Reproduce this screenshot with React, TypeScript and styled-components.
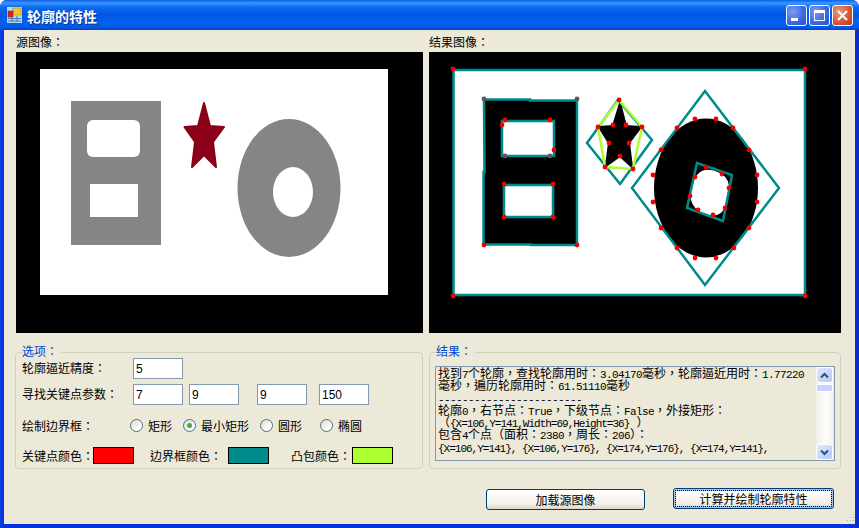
import React from 'react'
import styled, { createGlobalStyle } from 'styled-components'

const GlobalStyle = createGlobalStyle`
  html, body {
    margin: 0;
    padding: 0;
    background: #fff;
  }
  body {
    font-family: 'Liberation Sans', 'Noto Sans CJK TC', sans-serif;
    font-size: 12px;
    color: #000;
  }
`

const Window = styled.div`
  width: 859px;
  height: 528px;
  display: flex;
  flex-direction: column;
  box-sizing: border-box;
  border-radius: 7px 7px 0 0;
  overflow: hidden;
  position: relative;
  background: linear-gradient(to right, #0a3fe0 0, #0831d9 4px, #0831d9 855px, #0a2bc4 859px);
`

const TitleBar = styled.div`
  height: 30px;
  flex: none;
  display: flex;
  align-items: center;
  padding: 0 6px 0 7px;
  background: linear-gradient(
    to bottom,
    #0a5fe6 0,
    #3d95ff 3px,
    #0a6cf0 7px,
    #0058e6 14px,
    #0362ee 24px,
    #0353e2 28px,
    #0042c8 30px
  );
`

const TitleText = styled.span`
  margin: 1px 0 0 5px;
  flex: 1;
  font-size: 14px;
  font-weight: bold;
  color: #fff;
  text-shadow: 1px 1px 1px #0a2a90;
`

const CaptionButton = styled.div<{ $close?: boolean }>`
  width: 21px;
  height: 21px;
  margin-left: 2px;
  box-sizing: border-box;
  border: 1px solid #fff;
  border-radius: 3px;
  display: flex;
  align-items: center;
  justify-content: center;
  background: ${(p) =>
    p.$close
      ? 'radial-gradient(circle at 30% 30%, #e99a80, #d8532f 60%, #b83a18)'
      : 'radial-gradient(circle at 30% 30%, #7d9df0, #3c66e0 60%, #2a4fd0)'};
`

const Client = styled.div`
  flex: 1;
  margin: 0 4px 4px;
  padding: 6px 14px 0 12px;
  background: #ece9d8;
  display: flex;
  flex-direction: column;
`

const ImageRow = styled.div`
  display: flex;
  gap: 6px;
`

const ImageColumn = styled.div<{ $width: number }>`
  width: ${(p) => p.$width}px;
  display: flex;
  flex-direction: column;
`

const ImageCaption = styled.div`
  height: 16px;
  line-height: 15px;
`

const Picture = styled.svg`
  display: block;
  height: 281px;
  width: 100%;
  background: #000;
`

const GroupRow = styled.div`
  display: flex;
  margin-top: 19px;
  margin-left: -1px;
  gap: 6px;
`

const Group = styled.div<{ $width: number }>`
  position: relative;
  width: ${(p) => p.$width}px;
  height: 117px;
  box-sizing: border-box;
  border: 1px solid #d0d0bf;
  border-radius: 4px;
`

const GroupTitle = styled.span`
  position: absolute;
  left: 6px;
  top: -8px;
  padding-right: 3px;
  line-height: 14px;
  background: #ece9d8;
  color: #0046d5;
`

const OptionsBody = styled.div`
  display: flex;
  flex-direction: column;
  padding: 5px 0 0 6px;
`

const Row = styled.div<{ $top?: number }>`
  display: flex;
  align-items: center;
  margin-top: ${(p) => p.$top ?? 0}px;
`

const RowLabel = styled.span`
  width: 111px;
  margin-top: -3px;
`

const NumberInput = styled.input<{ $left?: number }>`
  width: 50px;
  height: 21px;
  box-sizing: border-box;
  margin: 0 0 0 ${(p) => p.$left ?? 0}px;
  padding: 0 2px;
  border: 1px solid #8499ad;
  background: #fff;
  font: 12px 'Liberation Sans', sans-serif;
  color: #000;
  outline: none;
`

const RadioGrid = styled.div`
  display: grid;
  grid-template-columns: 108px 53px 77px 60px auto;
  align-items: center;
  margin-top: 12px;
  height: 14px;
`

const RadioItem = styled.label`
  display: flex;
  align-items: center;
  gap: 5px;
`

const RadioDot = styled.span<{ $checked?: boolean }>`
  width: 13px;
  height: 13px;
  box-sizing: border-box;
  border: 1px solid #4f6d8c;
  border-radius: 50%;
  display: flex;
  align-items: center;
  justify-content: center;
  background: linear-gradient(135deg, #dcd9cc, #ffffff 75%);
  &::after {
    content: '';
    display: ${(p) => (p.$checked ? 'block' : 'none')};
    width: 5px;
    height: 5px;
    border-radius: 50%;
    background: #4aa83f;
  }
`

const ColorLabel = styled.span<{ $width: number; $left?: number }>`
  width: ${(p) => p.$width}px;
  margin-left: ${(p) => p.$left ?? 0}px;
  white-space: nowrap;
`

const Swatch = styled.div<{ $color: string }>`
  width: 41px;
  height: 17px;
  box-sizing: border-box;
  border: 1px solid #000;
  background: ${(p) => p.$color};
`

const ResultBody = styled.div`
  margin: 13px 5px 0;
  height: 95px;
  box-sizing: border-box;
  border: 1px solid #8499ad;
  display: flex;
`

const ResultText = styled.div`
  flex: 1;
  padding: 2px 0 0 2px;
  font-family: 'Liberation Mono', 'Noto Sans CJK TC', monospace;
  line-height: 12.3px;
  white-space: pre;
  overflow: hidden;
  & > div {
    height: 12.3px;
    font-size: 12px;
  }
  span {
    font-size: 11px;
    letter-spacing: -0.6px;
  }
`

const Coords = styled.span`
  && {
    letter-spacing: -1px;
  }
`

const ScrollBar = styled.div`
  width: 17px;
  margin-right: 1px;
  flex: none;
  display: flex;
  flex-direction: column;
  background: linear-gradient(to right, #f1f0e8, #fdfdfa 60%, #f3f2ea);
`

const ScrollButton = styled.div`
  height: 16px;
  flex: none;
  box-sizing: border-box;
  border: 1px solid #fff;
  border-radius: 3px;
  display: flex;
  align-items: center;
  justify-content: center;
  background: linear-gradient(135deg, #e1eafe, #b4c8f6);
`

const ScrollThumb = styled.div`
  height: 8px;
  margin-top: 1px;
  box-sizing: border-box;
  border: 1px solid #fff;
  border-radius: 2px;
  background: #c3d3fb;
`

const ScrollTrack = styled.div`
  flex: 1;
`

const ButtonRow = styled.div`
  display: flex;
  justify-content: flex-end;
  align-items: flex-start;
  margin-top: 20px;
  margin-right: 7px;
`

const FormButton = styled.button<{ $width: number; $focused?: boolean; $left?: number }>`
  width: ${(p) => p.$width}px;
  height: 21px;
  margin: ${(p) => (p.$focused ? -1 : 0)}px 0 0 ${(p) => p.$left ?? 0}px;
  padding: 0;
  box-sizing: border-box;
  border: 1px solid #003c74;
  border-radius: 3px;
  background: linear-gradient(to bottom, #ffffff, #f3f2ec 70%, #dcd8ca);
  font: 12px 'Liberation Sans', 'Noto Sans CJK TC', sans-serif;
  color: #000;
  ${(p) =>
    p.$focused &&
    `
    box-shadow: inset 0 0 0 2px #a9c5ee;
    outline: 1px dotted #000;
    outline-offset: -3px;
  `}
`

const ResizeGrip = styled.svg`
  position: absolute;
  right: 4px;
  bottom: 5px;
`

const keyPoints = [
  [695, 119], [716, 119], [733, 128], [749, 150], [757, 175], [757, 202], [749, 228], [734, 248],
  [716, 258], [695, 258], [677, 248], [661, 228], [653, 202], [653, 175], [661, 150], [677, 128],
  [706, 167], [722, 174], [729, 188], [725, 208], [713, 215], [698, 210], [690, 196], [695, 177],
  [613, 125], [626, 125], [609, 143], [629, 143], [620, 156],
  [453, 69], [805, 69], [453, 296], [805, 296],
  [484, 245], [577, 245], [504, 217], [553, 217], [504, 184], [553, 184],
  [505, 120], [550, 120], [502, 125], [554, 150],
  [605, 167], [633, 169], [642, 127], [598, 127], [619, 100],
]

const dimPoints = [[484, 99], [577, 99], [505, 156], [550, 156]]

function SourcePicture() {
  return (
    <Picture viewBox="16 52 407 281">
      <rect x="40" y="69" width="348" height="226" fill="#fff" />
      <rect x="71" y="101" width="90" height="144" fill="#858585" />
      <rect x="87" y="120" width="53" height="37" rx="6" fill="#fff" />
      <rect x="90" y="184" width="48" height="33" fill="#fff" />
      <path
        d="M204 103 L210 126 L224 127 L213 142 L216 167 L204 155 L192 167 L195 142 L184.500 127 L198 126 Z"
        fill="#8b0018"
        stroke="#8b0018"
        strokeWidth="2"
        strokeLinejoin="round"
      />
      <ellipse cx="289" cy="188" rx="51.5" ry="69" fill="#858585" />
      <ellipse cx="293" cy="192" rx="20" ry="25" fill="#fff" />
    </Picture>
  )
}

function ResultPicture() {
  return (
    <Picture viewBox="429 52 412 281">
      <rect x="453.5" y="70" width="351.5" height="225" fill="#fff" stroke="#008b8b" strokeWidth="2.5" />
      <rect x="484" y="100" width="93" height="145" fill="#000" />
      <path
        d="M484 99.5 H530 V100.5 H577 V245 H531 V244.5 H483.5 V172 H484.5 Z"
        fill="none"
        stroke="#008b8b"
        strokeWidth="2.5"
      />
      <rect x="502" y="121" width="52" height="35" fill="#fff" stroke="#008b8b" strokeWidth="2.5" />
      <rect x="504" y="185" width="49" height="32" fill="#fff" stroke="#008b8b" strokeWidth="2.5" />
      <path
        d="M620 103 L626 126 L641 127 L629 143 L632 167 L620 156 L606 166 L609 143 L599 127 L613 126 Z"
        fill="#000"
        stroke="#000"
        strokeWidth="2"
        strokeLinejoin="round"
      />
      <polygon points="618,100 652,140 620,184 587,143" fill="none" stroke="#008b8b" strokeWidth="2.5" />
      <polygon points="619,100 642,127 633,169 605,167 598,127" fill="none" stroke="#adff2f" strokeWidth="2.5" />
      <ellipse cx="706" cy="188" rx="52" ry="69.5" fill="#000" />
      <path
        d="M697 175 Q705 165 722 174 Q730 180 729 190 Q728 205 722 212 Q714 219 700 212 Q690 206 690 192 Q691 182 697 175 Z"
        fill="#fff"
      />
      <polygon points="705,91 779,188 705,285 632,188" fill="none" stroke="#008b8b" strokeWidth="2.5" />
      <polygon points="697,163 732,175 723,221 687,208" fill="none" stroke="#008b8b" strokeWidth="2.5" />
      {keyPoints.map(([x, y]) => (
        <circle key={`${x}-${y}`} cx={x} cy={y} r="2.4" fill="#f00000" />
      ))}
      {dimPoints.map(([x, y]) => (
        <circle key={`${x}-${y}`} cx={x} cy={y} r="2.4" fill="#5f5560" />
      ))}
    </Picture>
  )
}

function ChevronIcon({ down }: { down?: boolean }) {
  return (
    <svg width="9" height="7" viewBox="0 0 9 7">
      <path
        d={down ? 'M1 1.5 L4.5 5 L8 1.5' : 'M1 5.5 L4.5 2 L8 5.5'}
        fill="none"
        stroke="#2f4f86"
        strokeWidth="2"
      />
    </svg>
  )
}

function AppIcon() {
  return (
    <svg width="15" height="16" viewBox="0 0 15 16">
      <rect x="0" y="0" width="15" height="16" fill="#b8d4ee" />
      <rect x="6" y="1" width="8" height="7" fill="#f4c430" stroke="#a08020" strokeWidth="0.5" />
      <rect x="1" y="4" width="5" height="6" fill="#d92020" stroke="#802020" strokeWidth="0.5" />
      <path d="M1 11.5 H14 M1 14 H14 M5 10 V15 M10 9 V15" stroke="#3b7fb5" strokeWidth="1" />
    </svg>
  )
}

export default function App() {
  return (
    <>
      <GlobalStyle />
      <Window>
        <TitleBar>
          <AppIcon />
          <TitleText>轮廓的特性</TitleText>
          <CaptionButton>
            <svg width="13" height="13" viewBox="0 0 13 13">
              <rect x="1" y="9" width="7" height="3" fill="#fff" />
            </svg>
          </CaptionButton>
          <CaptionButton>
            <svg width="13" height="13" viewBox="0 0 13 13">
              <rect x="1.5" y="1.5" width="10" height="10" fill="none" stroke="#fff" />
              <rect x="1" y="1" width="11" height="3" fill="#fff" />
            </svg>
          </CaptionButton>
          <CaptionButton $close>
            <svg width="13" height="13" viewBox="0 0 13 13">
              <path d="M2 2 L11 11 M11 2 L2 11" stroke="#fff" strokeWidth="2" />
            </svg>
          </CaptionButton>
        </TitleBar>

        <Client>
          <ImageRow>
            <ImageColumn $width={407}>
              <ImageCaption>源图像：</ImageCaption>
              <SourcePicture />
            </ImageColumn>
            <ImageColumn $width={412}>
              <ImageCaption>结果图像：</ImageCaption>
              <ResultPicture />
            </ImageColumn>
          </ImageRow>

          <GroupRow>
            <Group $width={408}>
              <GroupTitle>选项：</GroupTitle>
              <OptionsBody>
                <Row>
                  <RowLabel>轮廓逼近精度：</RowLabel>
                  <NumberInput readOnly value="5" />
                </Row>
                <Row $top={5}>
                  <RowLabel>寻找关键点参数：</RowLabel>
                  <NumberInput readOnly value="7" />
                  <NumberInput readOnly value="9" $left={6} />
                  <NumberInput readOnly value="9" $left={18} />
                  <NumberInput readOnly value="150" $left={12} />
                </Row>
                <RadioGrid>
                  <span>绘制边界框：</span>
                  <RadioItem>
                    <RadioDot />
                    矩形
                  </RadioItem>
                  <RadioItem>
                    <RadioDot $checked />
                    最小矩形
                  </RadioItem>
                  <RadioItem>
                    <RadioDot />
                    圆形
                  </RadioItem>
                  <RadioItem>
                    <RadioDot />
                    椭圆
                  </RadioItem>
                </RadioGrid>
                <Row $top={16}>
                  <ColorLabel $width={71}>关键点颜色：</ColorLabel>
                  <Swatch $color="#ff0000" />
                  <ColorLabel $width={78} $left={16}>
                    边界框颜色：
                  </ColorLabel>
                  <Swatch $color="#008b8b" />
                  <ColorLabel $width={61} $left={22}>
                    凸包颜色：
                  </ColorLabel>
                  <Swatch $color="#adff2f" />
                </Row>
              </OptionsBody>
            </Group>

            <Group $width={412}>
              <GroupTitle>结果：</GroupTitle>
              <ResultBody>
                <ResultText>
                  <div>
                    找到<span>7</span>个轮廓，查找轮廓用时：<span>3.04170</span>毫秒，轮廓逼近用时：<span>1.77220</span>
                  </div>
                  <div>
                    毫秒，遍历轮廓用时：<span>61.51110</span>毫秒
                  </div>
                  <div>
                    <span>------------------------</span>
                  </div>
                  <div>
                    轮廓<span>0</span>，右节点：<span>True</span>，下级节点：<span>False</span>，外接矩形：
                  </div>
                  <div>
                    （<Coords>{'{X=106,Y=141,Width=69,Height=36}'}</Coords> ）
                  </div>
                  <div>
                    包含<span>4</span>个点（面积：<span>2380</span>，周长：<span>206</span>）：
                  </div>
                  <div>
                    <Coords>{'{X=106,Y=141}, {X=106,Y=176}, {X=174,Y=176}, {X=174,Y=141},'}</Coords>
                  </div>
                </ResultText>
                <ScrollBar>
                  <ScrollButton>
                    <ChevronIcon />
                  </ScrollButton>
                  <ScrollThumb />
                  <ScrollTrack />
                  <ScrollButton>
                    <ChevronIcon down />
                  </ScrollButton>
                </ScrollBar>
              </ResultBody>
            </Group>
          </GroupRow>

          <ButtonRow>
            <FormButton $width={159}>加载源图像</FormButton>
            <FormButton $width={161} $left={28} $focused>
              计算并绘制轮廓特性
            </FormButton>
          </ButtonRow>
        </Client>

        <ResizeGrip width="10" height="10" viewBox="0 0 10 10">
          <path d="M8 1h1v1H8z M5 4h1v1H5z M8 4h1v1H8z M2 7h1v1H2z M5 7h1v1H5z M8 7h1v1H8z" fill="#b5b29e" />
        </ResizeGrip>
      </Window>
    </>
  )
}
